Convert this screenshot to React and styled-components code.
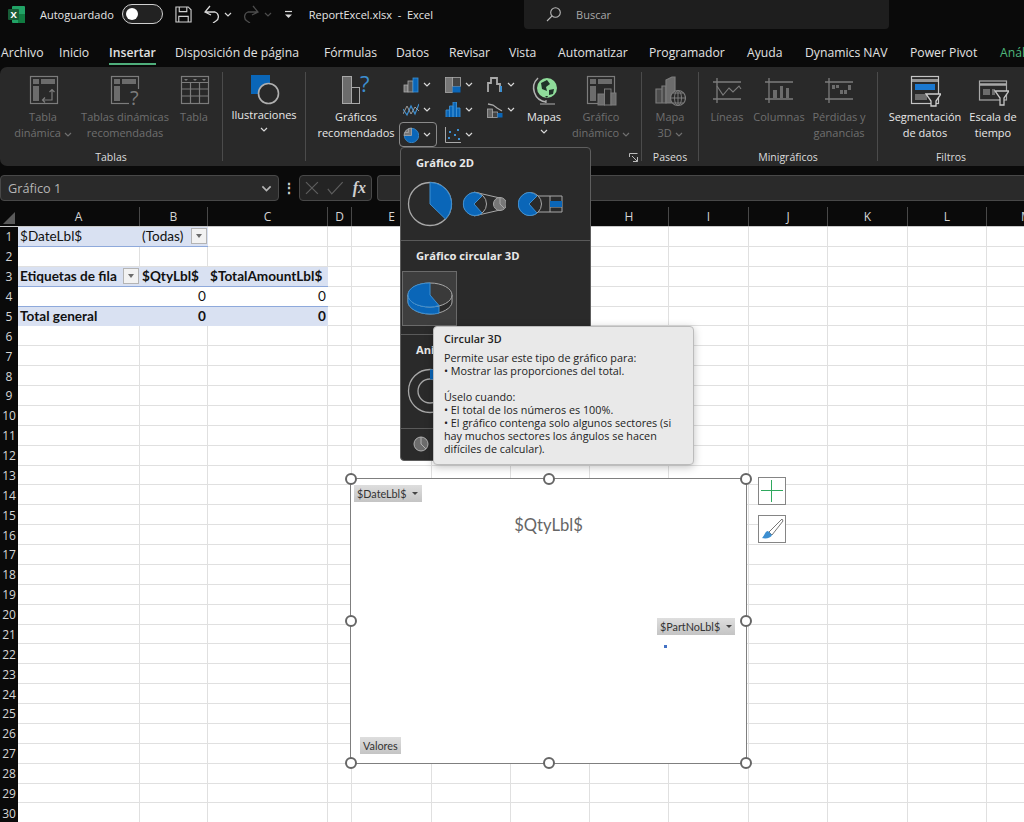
import React from 'react'
import styled, { createGlobalStyle } from 'styled-components'

const UI = '"Open Sans", "Noto Sans", sans-serif'
const SHEET = 'Lato, "Noto Sans", sans-serif'
const BLUE = '#0a66b8'
const DIM = '#7c7c7c'
const DIMFILL = '#6c6c6c'
const LITE = '#c4c4c4'

const Global = createGlobalStyle`
html, body { margin: 0; padding: 0; background: #fff; overflow: hidden; }
* { box-sizing: border-box; }
`
const Page = styled.div`
position: relative;
width: 1024px;
height: 822px;
overflow: hidden;
background: #0a0a0a;
font-family: ${UI};
display: flex;
flex-direction: column;
`
const TitleBar = styled.div`
flex: none;
height: 32px;
display: flex;
align-items: flex-start;
padding-left: 8px;
color: #e6e6e6;
font-size: 11px;
`
const Slot = styled.div`
height: 28px;
display: flex;
align-items: center;
margin-left: ${p => p.$ml || 0}px;
`
const Toggle = styled.div`
width: 41px;
height: 20px;
border: 1.5px solid #cfcfcf;
border-radius: 10px;
background: #222;
display: flex;
align-items: center;
padding-left: 3px;
&::before {
    content: '';
    width: 12px;
    height: 12px;
    border-radius: 50%;
    background: #fff;
}
`
const SearchBox = styled.div`
width: 365px;
height: 29px;
margin-left: 91px;
padding-left: 22px;
display: flex;
align-items: center;
gap: 15px;
background: #1e1e1e;
border-radius: 0 0 4px 4px;
color: #a8a8a8;
`
const Tabs = styled.div`
flex: none;
height: 35px;
display: flex;
padding: 11px 0 0 1px;
white-space: nowrap;
`
const Tab = styled.div`
position: relative;
flex: none;
width: ${p => p.$w}px;
height: 20px;
line-height: 20px;
font-size: 12.2px;
color: ${p => (p.$green ? '#4fb77c' : '#e2e2e2')};
font-weight: ${p => (p.$active ? 600 : 400)};
${p => p.$active && `
    &::after {
        content: '';
        position: absolute;
        left: 0;
        width: 47px;
        bottom: -2px;
        height: 2px;
        background: #4fae7b;
    }
`}
`
const Ribbon = styled.div`
flex: none;
height: 99px;
display: flex;
background: #292929;
border-radius: 7px 0 0 7px;
`
const Group = styled.div`
position: relative;
width: ${p => p.$w}px;
height: 89px;
margin-top: 5px;
flex: none;
border-right: ${p => (p.$last ? 'none' : '1px solid #4b4b4b')};
display: flex;
flex-direction: column;
`
const GroupBody = styled.div`
height: 77px;
display: flex;
justify-content: ${p => (p.$center ? 'center' : 'flex-start')};
padding-left: ${p => p.$pl || 0}px;
`
const GroupLabel = styled.div`
height: 12px;
line-height: 16px;
font-size: 10.5px;
text-align: center;
color: #dcdcdc;
`
const Launcher = styled.svg`
position: absolute;
right: 3px;
bottom: -1px;
`
const LargeBtn = styled.div`
width: ${p => p.$w}px;
flex: none;
padding-top: 3px;
display: flex;
flex-direction: column;
align-items: center;
color: ${p => (p.$off ? '#6f6f6f' : '#e8e8e8')};
font-size: 11px;
line-height: 16px;
white-space: nowrap;
svg.icon { margin-bottom: 2px; display: block; }
`
const ChartGrid = styled.div`
width: 126px;
flex: none;
margin-left: 1px;
display: grid;
grid-template-columns: repeat(3, 42px);
grid-auto-rows: 25px;
`
const SmallBtn = styled.div`
width: 38px;
height: 25px;
display: flex;
align-items: center;
gap: 4px;
padding-left: 3px;
border: 1px solid ${p => (p.$on ? '#8a8a8a' : 'transparent')};
border-radius: 4px;
`
const FormulaStrip = styled.div`
flex: none;
height: 41px;
display: flex;
align-items: center;
padding-top: 3px;
`
const NameBox = styled.div`
width: 279px;
height: 26px;
padding: 0 6px 0 7px;
display: flex;
align-items: center;
justify-content: space-between;
background: #2a2a2a;
border: 1px solid #484848;
border-radius: 4px;
color: #b5b5b5;
font-size: 12.7px;
`
const Dots = styled.div`
width: 20px;
text-align: center;
color: #cfcfcf;
font-size: 14px;
font-weight: 700;
line-height: 14px;
`
const FxBox = styled.div`
width: 73px;
height: 26px;
padding: 0 5px;
display: flex;
align-items: center;
gap: 9px;
background: #242424;
border: 1px solid #484848;
border-radius: 4px;
`
const Fx = styled.span`
font-family: "Liberation Serif", serif;
font-style: italic;
font-weight: 700;
font-size: 16px;
color: #cfcfcf;
`
const FormulaInput = styled.div`
flex: 1;
height: 26px;
margin-left: 5px;
background: #2a2a2a;
border: 1px solid #484848;
border-right: none;
border-radius: 4px 0 0 4px;
`
const Sheet = styled.div`
position: relative;
flex: none;
width: 1067px;
display: grid;
grid-template-columns: 18px 122px 68px 120px 24px 80px 79px 79px 79px 80px 79px 80px 79px 80px;
grid-template-rows: 19px 1px repeat(30, 19.88px);
background: #fff;
`
const HeadCell = styled.div`
position: relative;
background: #0a0a0a;
color: #d6d6d6;
font-size: 12px;
line-height: 19px;
text-align: center;
border-right: 1px solid #484848;
`
const Corner = styled.div`
background: #0a0a0a;
display: flex;
align-items: flex-end;
justify-content: flex-end;
padding: 0 3px 2px 0;
&::after {
    content: '';
    border-style: solid;
    border-width: 0 0 12px 12px;
    border-color: transparent transparent #5a5a5a transparent;
}
`
const HeadRule = styled.div`
grid-column: 1 / -1;
background: #c9c9c9;
`
const RowHead = styled.div`
background: #0a0a0a;
color: #d6d6d6;
font-size: 12px;
display: flex;
align-items: center;
justify-content: center;
`
const Cell = styled.div`
display: flex;
align-items: center;
justify-content: ${p => (p.$align === 'right' ? 'flex-end' : 'space-between')};
padding: 0 2px;
font-family: ${SHEET};
font-size: 13.6px;
font-weight: ${p => (p.$bold ? 700 : 400)};
color: #111;
white-space: nowrap;
background: ${p => (p.$fill ? '#d9e1f2' : '#fff')};
border-right: ${p => (p.$fill || p.$under ? 'none' : '1px solid #e0e0e0')};
border-bottom: 1px solid ${p => (p.$under ? '#8ea9db' : p.$fill ? '#d9e1f2' : '#e0e0e0')};
`
const FilterBtn = styled.div`
width: 16px;
height: 16px;
flex: none;
margin-right: -1px;
display: flex;
align-items: center;
justify-content: center;
background: #f2f2f2;
border: 1px solid #b4b4b4;
&::after {
    content: '';
    border-style: solid;
    border-width: 4px 3.5px 0 3.5px;
    border-color: #6c6c6c transparent transparent transparent;
}
`
const ChartFrame = styled.div`
position: absolute;
left: 350px;
top: 271px;
width: 397px;
height: 286px;
background: #fff;
border: 1.5px solid #7f7f7f;
`
const Handle = styled.div`
position: absolute;
width: 12px;
height: 12px;
left: calc(${p => p.$x}% - 6px);
top: calc(${p => p.$y}% - 6px);
background: #fff;
border: 2px solid #666;
border-radius: 50%;
`
const FieldBtn = styled.div`
position: absolute;
left: ${p => p.$x}px;
top: ${p => p.$y}px;
width: ${p => p.$w}px;
height: 17px;
padding-left: 3px;
display: flex;
align-items: center;
gap: 6px;
background: linear-gradient(#dedede, #c4c4c4);
font-family: ${SHEET};
font-size: 10.8px;
color: #333;
white-space: nowrap;
&::after {
    content: ${p => (p.$plain ? 'none' : "''")};
    border-style: solid;
    border-width: 3.5px 3.5px 0 3.5px;
    border-color: #444 transparent transparent transparent;
}
`
const ChartTitle = styled.div`
margin-top: 34px;
text-align: center;
font-family: ${SHEET};
font-size: 16.6px;
line-height: 24px;
color: #666;
`
const Dot = styled.div`
position: absolute;
left: 313px;
top: 166px;
width: 3px;
height: 3px;
background: #4472c4;
`
const SideBtn = styled.div`
position: absolute;
left: 758px;
top: ${p => p.$y}px;
width: 28px;
height: 28px;
display: flex;
align-items: center;
justify-content: center;
background: #fff;
border: 1px solid #858585;
`
const Gallery = styled.div`
position: absolute;
left: 400px;
top: 147px;
width: 191px;
height: 314px;
background: #2a2a2a;
border: 1px solid #5e5e5e;
border-radius: 4px;
display: flex;
flex-direction: column;
`
const GallerySection = styled.div`
height: ${p => p.$h}px;
flex: none;
border-bottom: ${p => (p.$last ? 'none' : '1px solid #5a5a5a')};
`
const GalleryTitle = styled.div`
height: 29px;
padding: 7px 0 0 15px;
font-size: 11.2px;
line-height: 16px;
font-weight: 700;
color: #e8e8e8;
`
const Thumbs = styled.div`
display: flex;
align-items: flex-start;
padding: ${p => (p.$tile ? '1px 0 0 0' : '4px 0 0 6px')};
gap: 10px;
svg { display: block; }
`
const PieOfPie = styled.svg`
margin-left: -3px;
`
const BarOfPie = styled.svg`
margin-left: 2px;
`
const Tile = styled.div`
width: 55px;
height: 55px;
margin-left: 1px;
display: flex;
align-items: center;
justify-content: center;
background: #3e3e3e;
border: 1px solid #6a6a6a;
`
const MoreRow = styled.div`
padding: 7px 0 0 12px;
display: flex;
align-items: center;
gap: 8px;
color: #e0e0e0;
font-size: 11px;
white-space: nowrap;
`
const Tooltip = styled.div`
position: absolute;
left: 433px;
top: 326px;
width: 261px;
height: 139px;
padding: 5px 10px;
background: #e9e9e9;
border: 1px solid #bcbcbc;
border-radius: 4px;
color: #222;
font-size: 10.8px;
line-height: 13px;
box-shadow: 0 2px 8px rgba(0, 0, 0, 0.25);
`
const TipTitle = styled.div`
font-weight: 600;
height: 19px;
`
const TipLine = styled.div`
min-height: 13px;
white-space: nowrap;
`
const LabelAfterIcon = styled.div`
margin-top: -2px;
`
const Below = styled.div`
margin-top: -1px;
height: 14px;
display: flex;
align-items: center;
`
const ChevronSvg = styled.svg`
flex: none;
`

const Ico = ({ w = 32, h = 32, className = 'icon', children }) => (
    <svg className={className} width={w} height={h} viewBox={`0 0 ${w} ${h}`} fill="none">{children}</svg>
)
const Chevron = ({ color = '#d8d8d8', w = 8, h = 5 }) => (
    <ChevronSvg width={w} height={h} viewBox="0 0 8 5" fill="none"><path d="M1 1l3 3 3-3" stroke={color} strokeWidth="1.2" /></ChevronSvg>
)

const PivotBase = ({ x = 3.5, s = DIM, f = DIMFILL }) => (
    <g>
        <rect x={x} y="1.5" width="27" height="27" stroke={s} strokeWidth="1.2" />
        <rect x={x + 2.5} y="4" width="6" height="5" fill={f} />
        <rect x={x + 10.5} y="4" width="14" height="5" fill={f} />
        <rect x={x + 2.5} y="11" width="6" height="15" fill={f} />
    </g>
)
const PivotIcon = () => (
    <Ico>
        <PivotBase />
        <path d="M16 25h9v-10M22.5 17l2.5-2.5 2.5 2.5M18 22.5L15.5 25l2.5 2.5" stroke={DIM} strokeWidth="1.2" />
    </Ico>
)
const RecPivotIcon = () => (
    <Ico>
        <PivotBase x={2.5} />
        <rect x="20" y="14" width="12" height="17" fill="#292929" />
        <text x="21" y="30" fontSize="20" fill={DIM} fontFamily={UI}>?</text>
    </Ico>
)
const TableIcon = () => (
    <Ico>
        <rect x="3.5" y="1.5" width="27" height="27" stroke={DIM} strokeWidth="1.2" />
        <path d="M3.5 7.5h27M3.5 14h27M3.5 21h27M12.5 7.5v21M21.5 7.5v21" stroke={DIM} strokeWidth="1.2" />
        <path d="M6 4h4l-2 2zM15 4h4l-2 2zM24 4h4l-2 2z" fill={DIM} />
    </Ico>
)
const ShapesIcon = () => (
    <Ico>
        <rect x="3" y="0" width="19" height="19" fill={BLUE} />
        <circle cx="20.5" cy="18.5" r="10" fill="#292929" stroke="#b0b0b0" strokeWidth="1.6" />
    </Ico>
)
const RecChartIcon = () => (
    <Ico w={40}>
        <rect x="6.5" y="1.5" width="9" height="27" fill={DIMFILL} stroke="#a8a8a8" />
        <rect x="15.5" y="12.5" width="8" height="16" fill="#292929" stroke="#a8a8a8" />
        <text x="24" y="17" fontSize="22" fill="#3d8fd1" fontFamily={UI}>?</text>
    </Ico>
)
const ColIcon = () => (
    <Ico w={16} h={16} className="s">
        <rect x="1" y="8" width="4" height="7" fill="#777" stroke="#aaa" strokeWidth=".8" />
        <rect x="5" y="4" width="5" height="11" fill="#555" stroke="#aaa" strokeWidth=".8" />
        <rect x="10" y="1" width="5" height="14" fill={BLUE} stroke="#3d8fd1" strokeWidth=".8" />
    </Ico>
)
const TreeIcon = () => (
    <Ico w={16} h={16} className="s">
        <rect x=".5" y=".5" width="7" height="15" fill="#777" stroke="#aaa" strokeWidth=".8" />
        <rect x="7.5" y=".5" width="8" height="9" fill="#444" stroke="#aaa" strokeWidth=".8" />
        <rect x="7.5" y="9.5" width="8" height="6" fill={BLUE} />
    </Ico>
)
const StepIcon = () => (
    <Ico w={16} h={16} className="s">
        <path d="M1 15V6h3V1h6v6h3v8" stroke="#aaa" strokeWidth="1.8" />
        <path d="M13 9v6h2V9z" fill="#3d8fd1" />
    </Ico>
)
const LineIcon = () => (
    <Ico w={16} h={16} className="s">
        <path d="M0 7l4 6 4-9 4 8 4-10" stroke="#3d8fd1" strokeWidth="1.2" />
        <path d="M0 12l4-8 4 8 4-7 4 4" stroke="#9a9a9a" strokeWidth="1" />
    </Ico>
)
const HistoIcon = () => (
    <Ico w={16} h={16} className="s">
        <path d="M1 15V8h3.5V15M4.5 15V4H8v11M8 15V0h3.5v15M11.5 15V6H15v9" fill={BLUE} stroke="#3d8fd1" strokeWidth=".9" />
    </Ico>
)
const ComboIcon = () => (
    <Ico w={16} h={16} className="s">
        <rect x=".5" y="7" width="5" height="8.5" fill="#666" stroke="#aaa" strokeWidth=".8" />
        <rect x="5.5" y="10" width="5" height="5.5" fill="#444" stroke="#aaa" strokeWidth=".8" />
        <rect x="10.5" y="11" width="5" height="4.5" fill={BLUE} />
        <path d="M1 2l5 1 4 3 5 3" stroke="#aaa" strokeWidth="1.3" />
    </Ico>
)
const PieSmallIcon = () => (
    <Ico w={16} h={16} className="s">
        <circle cx="8.5" cy="8.5" r="7.2" fill={BLUE} stroke="#3d8fd1" strokeWidth=".8" />
        <path d="M8.5 8.5V1A7.5 7.5 0 0 0 1 8.5z" fill="#777" stroke="#aaa" strokeWidth=".8" />
        <path d="M5.5 1.8v3.7H1.8" stroke="#aaa" strokeWidth=".8" />
    </Ico>
)
const ScatterIcon = () => (
    <Ico w={16} h={16} className="s">
        <path d="M.5 0v15.5H16" stroke="#aaa" />
        <path d="M3 10h2v2H3zM4 4h2v2H4zM9 7h2v2H9zM12 2h2v2h-2zM13 11h2v2h-2z" fill="#3d8fd1" />
    </Ico>
)
const MapIcon = () => (
    <Ico>
        <circle cx="19" cy="13" r="10" fill="#8fdc9a" />
        <path d="M13 8l6-3 3 4-4 3 1 4-5-2zM21 15l5-1-1 5-4 1zM17 21l3 0-1 2z" fill="#20332a" />
        <path d="M10 3A14 14 0 0 0 18 27" stroke="#b0b0b0" strokeWidth="1.5" />
        <path d="M18 25v3M12 29h15" stroke="#b0b0b0" strokeWidth="1.2" />
    </Ico>
)
const PivotChartIcon = () => (
    <Ico>
        <PivotBase x={2.5} />
        <rect x="13" y="19" width="6.5" height="11" fill={DIMFILL} stroke={DIM} />
        <rect x="19.5" y="14" width="6.5" height="16" fill="#292929" stroke={DIM} />
        <rect x="26" y="18" width="5" height="12" fill={DIMFILL} stroke={DIM} />
    </Ico>
)
const Map3DIcon = () => (
    <Ico>
        <path d="M2 14h6v14H2zM8 11h4v17H8z" stroke={DIM} strokeWidth="1.2" fill="#4c4c4c" />
        <path d="M12 5l6-3h3v20l-3 6h-6z" fill={DIMFILL} stroke={DIM} strokeWidth="1.2" />
        <circle cx="24" cy="23" r="7.5" fill="#292929" stroke={DIM} strokeWidth="1.2" />
        <path d="M16.5 23h15M24 15.5v15M19 18h10M19 28h10" stroke={DIM} />
        <ellipse cx="24" cy="23" rx="3.5" ry="7.5" stroke={DIM} />
    </Ico>
)
const SparkFrame = ({ children }) => (
    <Ico>
        <path d="M2 7h28M2 24h28M6 3v25" stroke={DIM} strokeWidth="1.3" />
        {children}
    </Ico>
)
const SparkLineIcon = () => (
    <SparkFrame><path d="M6 11l6 9 6-7 4 4 6-6 2 3" stroke={DIM} strokeWidth="1.1" /></SparkFrame>
)
const SparkColIcon = () => (
    <SparkFrame><path d="M10 15h4v8h-4zM17 11h3v12h-3zM23 13h3v10h-3z" fill={DIMFILL} /></SparkFrame>
)
const SparkLossIcon = () => (
    <SparkFrame><path d="M9 10h3v4H9zM13 10h3v3h-3zM17 15h3v4h-3zM21 15h3v4h-3zM25 10h3v5h-3z" fill={DIMFILL} /></SparkFrame>
)
const Funnel = ({ d, s = '#cfcfcf' }) => <path d={d} fill="#292929" stroke={s} strokeWidth="1.3" />
const SlicerIcon = () => (
    <Ico>
        <rect x="2.5" y="1.5" width="27" height="27" stroke={LITE} strokeWidth="1.2" />
        <path d="M2.5 5.5h27" stroke={LITE} strokeWidth="3" opacity=".7" />
        <rect x="6" y="9" width="20" height="6" fill="#1a78d0" />
        <rect x="6" y="19" width="12" height="6" fill={DIMFILL} />
        <Funnel d="M17 19h15l-5 7v5h-5v-5z" />
    </Ico>
)
const TimelineIcon = () => (
    <Ico>
        <rect x="2.5" y="6" width="27" height="19" stroke="#a8a8a8" strokeWidth="1.2" />
        <path d="M2.5 9.5h27" stroke="#a8a8a8" strokeWidth="2.5" />
        <path d="M6 14h7v6H6zM15 14h3v6h-3z" fill={DIMFILL} />
        <Funnel d="M18 16h14l-5 7v7h-4v-7z" s={LITE} />
    </Ico>
)

const LargeButton = ({ w, off, icon, lines, chevron }) => (
    <LargeBtn $w={w} $off={off}>
        {icon}
        {lines.map((l, i) => <div key={i}>{l}{chevron && i === lines.length - 1 && <> <Chevron color={off ? '#6f6f6f' : '#d8d8d8'} /></>}</div>)}
    </LargeBtn>
)

const columns = ['A', 'B', 'C', 'D', 'E', 'F', 'G', 'H', 'I', 'J', 'K', 'L', 'M']
const tabs = [
    ['Archivo', 58], ['Inicio', 50], ['Insertar', 66], ['Disposición de página', 149], ['Fórmulas', 72],
    ['Datos', 53], ['Revisar', 60], ['Vista', 49], ['Automatizar', 91], ['Programador', 98],
    ['Ayuda', 58], ['Dynamics NAV', 105], ['Power Pivot', 90], ['Análisis de gráfico dinámico', 190],
]

const cellData = {
    '1-0': { text: '$DateLbl$', fill: true, under: true },
    '1-1': { text: '(Todas)', fill: true, under: true, filter: true },
    '3-0': { text: 'Etiquetas de fila', fill: true, under: true, bold: true, filter: true },
    '3-1': { text: '$QtyLbl$', fill: true, under: true, bold: true },
    '3-2': { text: '$TotalAmountLbl$', fill: true, under: true, bold: true },
    '4-0': { under: true },
    '4-1': { text: '0', align: 'right', under: true },
    '4-2': { text: '0', align: 'right', under: true },
    '5-0': { text: 'Total general', fill: true, bold: true },
    '5-1': { text: '0', fill: true, bold: true, align: 'right' },
    '5-2': { text: '0', fill: true, bold: true, align: 'right' },
}
const rows = Array.from({ length: 30 }, (_, i) => i + 1)
const handles = [[0, 0], [50, 0], [100, 0], [0, 50], [100, 50], [0, 100], [50, 100], [100, 100]]
const smallCharts = [ColIcon, TreeIcon, StepIcon, LineIcon, HistoIcon, ComboIcon, PieSmallIcon, ScatterIcon]
const tipLines = [
    'Permite usar este tipo de gráfico para:',
    '• Mostrar las proporciones del total.',
    '',
    'Úselo cuando:',
    '• El total de los números es 100%.',
    '• El gráfico contenga solo algunos sectores (si',
    'hay muchos sectores los ángulos se hacen',
    'difíciles de calcular).',
]

function App() {
    return (
        <Page>
            <Global />
            <TitleBar>
                <Slot>
                    <svg width="17" height="17" viewBox="0 0 17 17">
                        <rect x="4" y="0" width="13" height="17" rx="1" fill="#21a366" />
                        <rect x="10" y="8" width="7" height="9" fill="#107c41" />
                        <rect x="0" y="3" width="11" height="11" rx="1" fill="#185c37" />
                        <text x="2.5" y="12" fontSize="9.5" fontWeight="700" fill="#fff" fontFamily={UI}>X</text>
                    </svg>
                </Slot>
                <Slot $ml={15}>Autoguardado</Slot>
                <Slot $ml={8}><Toggle /></Slot>
                <Slot $ml={12}>
                    <svg width="17" height="17" viewBox="0 0 18 18" fill="none" stroke="#cfcfcf" strokeWidth="1.2">
                        <path d="M1 1h13l3 3v13H1z" /><path d="M4.5 1v5h8V1M4 17v-6h10v6" />
                    </svg>
                </Slot>
                <Slot $ml={12}>
                    <svg width="17" height="18" viewBox="0 0 17 18" fill="none" stroke="#d8d8d8" strokeWidth="1.3">
                        <path d="M1 7h10a5 5 0 0 1 1 9l-3 2M6 1L1 7l6 3" />
                    </svg>
                </Slot>
                <Slot $ml={3}><Chevron /></Slot>
                <Slot $ml={10}>
                    <svg width="17" height="18" viewBox="0 0 17 18" fill="none" stroke="#4c4c4c" strokeWidth="1.3">
                        <path d="M16 7H6a5 5 0 0 0-1 9l3 2M11 1l5 6-6 3" />
                    </svg>
                </Slot>
                <Slot $ml={5}><Chevron color="#4c4c4c" /></Slot>
                <Slot $ml={12}>
                    <svg width="9" height="9" viewBox="0 0 9 9" fill="none"><path d="M1 1.5h7" stroke="#d8d8d8" strokeWidth="1.2" /><path d="M1 4.5h7L4.5 8z" fill="#d8d8d8" /></svg>
                </Slot>
                <Slot $ml={16}>ReportExcel.xlsx&nbsp; - &nbsp;Excel</Slot>
                <SearchBox>
                    <svg width="15" height="15" viewBox="0 0 15 15" fill="none" stroke="#b8b8b8" strokeWidth="1.1"><circle cx="9.5" cy="5.5" r="4.8" /><path d="M6 9l-5 5" /></svg>
                    Buscar
                </SearchBox>
            </TitleBar>
            <Tabs>
                {tabs.map(([t, w], i) => <Tab key={t} $w={w} $active={t === 'Insertar'} $green={i === tabs.length - 1}>{t}</Tab>)}
            </Tabs>
            <Ribbon>
                <Group $w={223}>
                    <GroupBody $pl={8}>
                        <LargeButton w={70} off icon={<PivotIcon />} lines={['Tabla', 'dinámica']} chevron />
                        <LargeButton w={94} off icon={<RecPivotIcon />} lines={['Tablas dinámicas', 'recomendadas']} />
                        <LargeButton w={44} off icon={<TableIcon />} lines={['Tabla']} />
                    </GroupBody>
                    <GroupLabel>Tablas</GroupLabel>
                </Group>
                <Group $w={83}>
                    <GroupBody $center>
                        <LargeBtn $w={80}>
                            <ShapesIcon />
                            <LabelAfterIcon>Ilustraciones</LabelAfterIcon>
                            <Below><Chevron /></Below>
                        </LargeBtn>
                    </GroupBody>
                </Group>
                <Group $w={336}>
                    <GroupBody $pl={8}>
                        <LargeButton w={84} icon={<RecChartIcon />} lines={['Gráficos', 'recomendados']} />
                        <ChartGrid>
                            {smallCharts.map((C, i) => (
                                <SmallBtn key={i} $on={C === PieSmallIcon}><C /><Chevron /></SmallBtn>
                            ))}
                        </ChartGrid>
                        <LargeBtn $w={38}>
                            <MapIcon />
                            <div>Mapas</div>
                            <Below><Chevron /></Below>
                        </LargeBtn>
                        <LargeButton w={76} off icon={<PivotChartIcon />} lines={['Gráfico', 'dinámico']} chevron />
                    </GroupBody>
                    <Launcher width="9" height="9" viewBox="0 0 9 9" fill="none" stroke="#bbb">
                        <path d="M.5 4V.5H8.5M8.5 8.5L3 3M8.5 4v4.5H4" />
                    </Launcher>
                </Group>
                <Group $w={57}>
                    <GroupBody $center>
                        <LargeButton w={50} off icon={<Map3DIcon />} lines={['Mapa', '3D']} chevron />
                    </GroupBody>
                    <GroupLabel>Paseos</GroupLabel>
                </Group>
                <Group $w={179}>
                    <GroupBody $pl={2}>
                        <LargeButton w={52} off icon={<SparkLineIcon />} lines={['Líneas']} />
                        <LargeButton w={52} off icon={<SparkColIcon />} lines={['Columnas']} />
                        <LargeButton w={68} off icon={<SparkLossIcon />} lines={['Pérdidas y', 'ganancias']} />
                    </GroupBody>
                    <GroupLabel>Minigráficos</GroupLabel>
                </Group>
                <Group $w={146} $last>
                    <GroupBody $pl={5}>
                        <LargeButton w={84} icon={<SlicerIcon />} lines={['Segmentación', 'de datos']} />
                        <LargeButton w={52} icon={<TimelineIcon />} lines={['Escala de', 'tiempo']} />
                    </GroupBody>
                    <GroupLabel>Filtros</GroupLabel>
                </Group>
            </Ribbon>
            <FormulaStrip>
                <NameBox>Gráfico 1<Chevron color="#b5b5b5" w={11} h={7} /></NameBox>
                <Dots>⋮</Dots>
                <FxBox>
                    <svg width="39" height="14" viewBox="0 0 39 14" fill="none" stroke="#5e5e5e" strokeWidth="1.2">
                        <path d="M1 1l12 12M13 1L1 13M23 8l4 5 11-12" />
                    </svg>
                    <Fx>fx</Fx>
                </FxBox>
                <FormulaInput />
            </FormulaStrip>
            <Sheet>
                <Corner />
                {columns.map(c => <HeadCell key={c}>{c}</HeadCell>)}
                <HeadRule />
                {rows.map(r => (
                    <React.Fragment key={r}>
                        <RowHead>{r}</RowHead>
                        {columns.map((c, i) => {
                            const d = cellData[`${r}-${i}`] || {}
                            return (
                                <Cell key={c} $fill={d.fill} $bold={d.bold} $align={d.align} $under={d.under}>
                                    {d.text}
                                    {d.filter && <FilterBtn />}
                                </Cell>
                            )
                        })}
                    </React.Fragment>
                ))}
                <ChartFrame>
                    <FieldBtn $x={3} $y={6} $w={68}>$DateLbl$</FieldBtn>
                    <ChartTitle>$QtyLbl$</ChartTitle>
                    <FieldBtn $x={306} $y={139} $w={78}>$PartNoLbl$</FieldBtn>
                    <Dot />
                    <FieldBtn $x={9} $y={258} $w={41} $plain>Valores</FieldBtn>
                    {handles.map(([x, y]) => <Handle key={`${x}-${y}`} $x={x} $y={y} />)}
                </ChartFrame>
                <SideBtn $y={270}>
                    <svg width="22" height="22" viewBox="0 0 22 22" stroke="#2fa85e" strokeWidth="1"><path d="M10.5 0v22M0 10.5h22" /></svg>
                </SideBtn>
                <SideBtn $y={308}>
                    <svg width="24" height="24" viewBox="0 0 24 24" fill="none">
                        <path d="M22 2L9 15l3 3L23 4z" fill="#fff" stroke="#777" />
                        <path d="M8 14c-3 0-3 4-6 7 4 1 9 0 10-3z" fill="#3d8fd1" />
                    </svg>
                </SideBtn>
            </Sheet>
            <Gallery>
                <GallerySection $h={93}>
                    <GalleryTitle>Gráfico 2D</GalleryTitle>
                    <Thumbs>
                        <svg width="46" height="46" viewBox="0 0 46 46" fill="none">
                            <circle cx="23" cy="23" r="21.5" stroke="#a8a8a8" strokeWidth="1.3" />
                            <path d="M23 1.5A21.5 21.5 0 0 1 38.5 38L23 23z" fill={BLUE} stroke="#3d8fd1" />
                        </svg>
                        <PieOfPie width="46" height="46" viewBox="0 0 46 46" fill="none" stroke="#a8a8a8">
                            <path d="M14 11l26 6M14 35l26-6" />
                            <circle cx="40" cy="23" r="6.5" fill="#777" />
                            <path d="M40 17v6l4 4" />
                            <circle cx="15" cy="23" r="11.5" fill="#2a2a2a" />
                            <path d="M15 11.5A11.5 11.5 0 1 0 22 32L14 23l8-8A11.5 11.5 0 0 0 15 11.5z" fill={BLUE} stroke="#3d8fd1" />
                        </PieOfPie>
                        <BarOfPie width="46" height="46" viewBox="0 0 46 46" fill="none" stroke="#a8a8a8">
                            <path d="M12 15h32v16H12zM32 15v16M32 20.5h12M32 26h12" />
                            <rect x="32" y="20" width="12" height="6" fill={BLUE} stroke="none" />
                            <circle cx="12" cy="23" r="11.5" fill="#2a2a2a" />
                            <path d="M12 11.5A11.5 11.5 0 1 0 19 32L11 23l8-8A11.5 11.5 0 0 0 12 11.5z" fill={BLUE} stroke="#3d8fd1" />
                        </BarOfPie>
                    </Thumbs>
                </GallerySection>
                <GallerySection $h={94}>
                    <GalleryTitle>Gráfico circular 3D</GalleryTitle>
                    <Thumbs $tile>
                        <Tile>
                            <svg width="46" height="34" viewBox="0 0 46 34" fill="none">
                                <path d="M1 13v7c0 6 10 12 22 12s22-6 22-12v-7" fill="#2a2a2a" stroke="#a8a8a8" />
                                <path d="M1 13v7c0 6 10 12 22 12 3 0 6 0 9-1v-7z" fill={BLUE} stroke="#3d8fd1" />
                                <ellipse cx="23" cy="13" rx="22" ry="12" fill="#3a3a3a" stroke="#a8a8a8" />
                                <path d="M23 1C10 1 1 6 1 13s10 12 22 12c3 0 6-.5 9-1.5L23 13z" fill={BLUE} stroke="#3d8fd1" />
                            </svg>
                        </Tile>
                    </Thumbs>
                </GallerySection>
                <GallerySection $h={94}>
                    <GalleryTitle>Anillo</GalleryTitle>
                    <Thumbs>
                        <svg width="46" height="46" viewBox="0 0 46 46" fill="none" stroke="#a8a8a8" strokeWidth="1.3">
                            <circle cx="23" cy="23" r="21.5" />
                            <circle cx="23" cy="23" r="12" />
                            <path d="M23 1.5h5v10h-5z" fill={BLUE} stroke="none" />
                        </svg>
                    </Thumbs>
                </GallerySection>
                <GallerySection $last $h={30}>
                    <MoreRow>
                        <svg width="16" height="16" viewBox="0 0 16 16" fill="none" stroke="#b0b0b0"><circle cx="8" cy="8" r="7" fill="#6c6c6c" /><path d="M8 8V1M8 8l5 5" /></svg>
                        Más gráficos circulares...
                    </MoreRow>
                </GallerySection>
            </Gallery>
            <Tooltip>
                <TipTitle>Circular 3D</TipTitle>
                {tipLines.map((l, i) => <TipLine key={i}>{l}</TipLine>)}
            </Tooltip>
        </Page>
    )
}

export default App
